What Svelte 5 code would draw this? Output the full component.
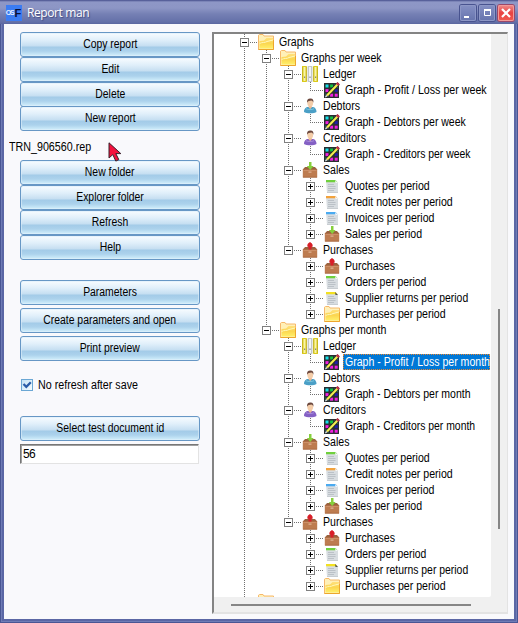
<script>
  const graphs = (suffix, selected = false) => [
    { label: 'Ledger', icon: 'ledger', kids: [{ label: 'Graph - Profit / Loss per ' + suffix, icon: 'graph', selected, scale: selected ? 0.88 : 0.889 }] },
    { label: 'Debtors', icon: 'debtor', kids: [{ label: 'Graph - Debtors per ' + suffix, icon: 'graph', scale: 0.875 }] },
    { label: 'Creditors', icon: 'creditor', kids: [{ label: 'Graph - Creditors per ' + suffix, icon: 'graph', scale: 0.867 }] },
    { label: 'Sales', icon: 'sales', kids: [
      { label: 'Quotes per period', icon: 'docgreen', closed: true },
      { label: 'Credit notes per period', icon: 'docorange', closed: true },
      { label: 'Invoices per period', icon: 'docblue', closed: true },
      { label: 'Sales per period', icon: 'sales', closed: true }
    ] },
    { label: 'Purchases', icon: 'purchases', kids: [
      { label: 'Purchases', icon: 'purchases', closed: true },
      { label: 'Orders per period', icon: 'docgreen', closed: true, scale: 0.865 },
      { label: 'Supplier returns per period', icon: 'docyellow', closed: true, scale: 0.867 },
      { label: 'Purchases per period', icon: 'folder', closed: true }
    ] }
  ];
  const tree = [
    { label: 'Graphs', icon: 'folder', kids: [
      { label: 'Graphs per week', icon: 'folder', kids: graphs('week') },
      { label: 'Graphs per month', icon: 'folder', kids: graphs('month', true) }
    ] },
    { label: '', icon: 'folder', closed: true, more: true }
  ];
  function flatten(nodes, depth = 0, lines = []) {
    return nodes.flatMap((n, i) => {
      const more = n.more || i < nodes.length - 1;
      return [{ ...n, depth, lines, more }, ...(n.kids ? flatten(n.kids, depth + 1, [...lines, more]) : [])];
    });
  }
  const rows = flatten(tree);
  const docColors = { docgreen: '#6fd03c', docorange: '#f2a23c', docblue: '#4aaaf0', docyellow: '#f2e020' };
  const dots = ['#14e0e8', '#10c040', '#14e0e8', '#f020e0', '#10c040', '#2020a8', '#14e0e8', '#f020e0', '#f020e0'];
  let checked = $state(true);
  let docId = $state('56');
</script>

{#snippet button(label)}
  <button><span class="t">{label}</span></button>
{/snippet}

{#snippet glyph(name)}
  <svg class="icon" width="16" height="16" viewBox="0 0 16 16">
    {#if name === 'folder'}
      <path d="M.5 15.5V1.2L1.5.5H5l1 1.5h9.5v13.5z" fill="#fff0b8" stroke="#f6b86a" />
      <path d="M1.5 14.5V7l4.5-.5L8.5 4H15v10.5z" fill="url(#folderFill)" />
      <path d="M1.5 9.5C4 8 7 9 9 7.5L15 6" stroke="#fff8bd" fill="none" />
      <path d="M.5 15.5h15V6" stroke="#eda72c" fill="none" />
    {:else if name === 'ledger'}
      <path d="M0 0h5v16H0zM11 0h5v16h-5z" fill="#dccb1c" />
      <path d="M5.5 0h5v16h-5z" fill="#c3c8cc" />
      <path d="M1.5 1h2v14h-2zM12.5 1h2v14h-2z" fill="#f8f3a8" />
      <path d="M7 1h2v14H7z" fill="#f2f4f6" />
      <path d="M5.2 0v16M10.8 0v16" stroke="#fff" stroke-width=".6" />
      <path d="M.3 1v14M4.6 1v14M11.4 1v14M15.7 1v14" stroke="#b0a11c" stroke-width=".6" />
      <path d="M2 10.5h1.2V12H2zM7.4 10.5h1.2V12H7.4zM13 10.5h1.2V12H13z" fill="#888" />
    {:else if name === 'graph'}
      <path d="M0 1h15v15H0z" fill="#2a2e31" />
      {#each dots as color, i}
        <rect x={1.5 + (i % 3) * 4.6} y={2.5 + Math.floor(i / 3) * 4.6} width="3" height="3" fill={color} />
      {/each}
      <path d="M2 14.5 14.5 1.5" stroke="#222" stroke-width="3.4" />
      <path d="M3 13.5 13.5 2.5" stroke="#f3ee50" stroke-width="2.2" />
      <path d="m13 2.8 1.7-1.7" stroke="#c03048" stroke-width="3" />
      <path d="m1 15.5 1-2.7 1.6 1.5z" fill="#eee" />
    {:else if name === 'debtor' || name === 'creditor'}
      <path d="M2 14C2 10.5 4 9 6 9h4.5c2.5 0 4 2 4 5-2 1.8-10.5 1.8-12.5 0z" fill={name === 'debtor' ? '#4a9fc6' : '#8460c4'} />
      <path d="M4 10.7c2 1.2 6 1.2 8 0" stroke={name === 'debtor' ? '#79c3dc' : '#a78ad8'} fill="none" />
      <path d="M6.6 7h3.2v2.5L8.2 11 6.6 9.5z" fill="#edb993" />
      <ellipse cx="8.2" cy="5" rx="2.9" ry="3.6" fill="#f4cda9" />
      <path d="M5 4.7C4.6 1.8 6.3.3 8.5.5c2.6 0 3.3 2 2.8 4.2-.6-1.5-1-2-2-2.1-1.6.2-3.3.3-4.3 2.1z" fill="#6b473c" />
    {:else if name === 'sales' || name === 'purchases'}
      <path d="M1 7.5 3 5h10l2 2.5z" fill="#9a6340" />
      <path d="M.8 7h14.4v8.5H.8z" fill="#bd7c50" />
      <path d="M1 7.3h14M1 15.2h14" stroke="#a0623c" stroke-width=".7" />
      <path d="M1.5 8.5h13" stroke="#cd9068" />
      <path d="M6.5 9.5h3v1.3h-3z" fill="#dfb292" />
      {#if name === 'sales'}
        <path d="M7 0h2.5v4h2.2L8.2 8 4.8 4H7z" fill="#86cf3c" />
      {:else}
        <path d="M8 0C9.3.6 11 2.2 10.7 4.4L9.5 5V7.5h-3V5L5.3 4.4C5 2.2 6.7.6 8 0z" fill="#d81f28" />
      {/if}
    {:else}
      <path d="M2 2h9.5L14 4.5V15H3z" fill="#d8dde1" />
      <path d="M2 2h9.5l2 2.2H2z" fill={docColors[name]} />
      <path d="m11 2 3 3h-2.5z" fill={name === 'docyellow' ? '#555' : '#f4f6f8'} />
      <path d="M4 6.5h6M4 8.5h7.5M4 10.5h7.5M4 12.5h6" stroke="#bbc1c7" />
      <path d="M3 14.5h11" stroke="#c8cdd1" />
    {/if}
  </svg>
{/snippet}

<svg class="defs" width="0" height="0">
  <defs>
    <linearGradient id="folderFill" x2="0" y2="1">
      <stop stop-color="#ffe07c" /><stop offset=".5" stop-color="#fbd650" /><stop offset="1" stop-color="#fff06a" />
    </linearGradient>
  </defs>
</svg>

<div class="window">
  <header>
    <div class="logo"><i>OS</i><b>F</b></div>
    <h1>Report man</h1>
    <div class="controls">
      <span class="ctl"><svg width="16" height="16"><path d="M4 12h5" stroke="#fff" stroke-width="2" /></svg></span>
      <span class="ctl"><svg width="16" height="16"><path d="M5.5 5.5h6v5h-6z" fill="none" stroke="#fff" /><path d="M5 5h7" stroke="#fff" stroke-width="2" /></svg></span>
      <span class="ctl close"><svg width="16" height="16"><path d="m4 4 8 8m0-8-8 8" stroke="#fff" stroke-width="2.2" /></svg></span>
    </div>
  </header>
  <main>
    <section class="side">
      <div class="group tight">
        {@render button('Copy report')}
        {@render button('Edit')}
        {@render button('Delete')}
        {@render button('New report')}
      </div>
      <div class="file"><span class="t">TRN_906560.rep</span></div>
      <div class="group">
        {@render button('New folder')}
        {@render button('Explorer folder')}
        {@render button('Refresh')}
        {@render button('Help')}
      </div>
      <div class="group spaced">
        {@render button('Parameters')}
        {@render button('Create parameters and open')}
        {@render button('Print preview')}
      </div>
      <label>
        <input type="checkbox" bind:checked />
        <span class="check">
          {#if checked}<svg width="10" height="10"><path d="M1.5 4 4.3 6.8 8.8 2.3" fill="none" stroke="#2a5ca8" stroke-width="2.3" /></svg>{/if}
        </span>
        <span class="t">No refresh after save</span>
      </label>
      {@render button('Select test document id')}
      <input class="field" bind:value={docId} />
    </section>
    <section class="panel">
      <div class="view">
        <div class="tree">
          {#each rows as row}
            <div class="row">
              <svg width={24 + row.depth * 22} height="16" shape-rendering="crispEdges">
                <g stroke="#707070" stroke-dasharray="1 1">
                  {#each row.lines as on, i}
                    {#if on}<path d="M{10.5 + i * 22} 0v16" />{/if}
                  {/each}
                  <path d="M{10.5 + row.depth * 22} 0v{row.more ? 16 : 8}" />
                  <path d="M{10 + row.depth * 22} 8.5h13" />
                </g>
                {#if row.kids || row.closed}
                  <rect x={6.5 + row.depth * 22} y="4.5" width="8" height="8" fill="#fff" stroke="#808080" />
                  <path d="M{8 + row.depth * 22} 8.5h5" stroke="#000" />
                  {#if row.closed}<path d="M{10.5 + row.depth * 22} 6v5" stroke="#000" />{/if}
                {/if}
              </svg>
              {@render glyph(row.icon)}
              <span class="label" class:selected={row.selected}><span class="t" style:--scale={row.scale ?? 0.882}>{row.label}</span></span>
            </div>
          {/each}
        </div>
        <div class="vbar"><i></i></div>
      </div>
      <div class="hbar"><i></i></div>
    </section>
  </main>
  <svg class="cursor" width="15" height="21"><path d="M1 .8 1 16l3.8-3.4 3 6.5 3-1.5-3-6h5z" fill="#f3113d" stroke="#38202b" /></svg>
</div>

<style>
  :global(body) { margin: 0; overflow: hidden; }
  * { box-sizing: border-box; }
  .defs { position: absolute; }
  .window {
    position: relative; width: 518px; height: 623px; display: flex; flex-direction: column;
    padding: 0 4px 4px; font: 12px/16px "Liberation Sans", Arial, sans-serif; color: #000;
    background: #5b67a5; box-shadow: inset 0 0 0 1px #4a5694, inset 0 0 0 2px #6f7cb6;
  }
  header {
    height: 24px; flex: none; margin: 0 -4px; padding: 1px 4px 0 6px; display: flex; align-items: center;
    background: linear-gradient(#464f8c 0, #8e97c6 2px, #8d96c5 8px, #7580b4 14px, #6470a8 22px, #5a66a0);
  }
  .logo {
    width: 16px; height: 16px; flex: none; display: flex; align-items: center; justify-content: center;
    background: #3c7cf2; font: bold 7px/16px "Liberation Sans", sans-serif; letter-spacing: -1.2px;
  }
  .logo i { font-style: normal; color: #e4eeff; margin-left: -1px; }
  .logo b { font-size: 11px; color: #081038; margin-left: 1px; letter-spacing: 0; }
  h1 { margin: 0 0 0 5px; flex: 1; font: 12px/22px "Open Sans", sans-serif; color: #fff; text-shadow: 1px 1px 1px #424b80; letter-spacing: -.4px; }
  .controls { display: flex; gap: 3px; }
  .ctl { width: 16px; height: 16px; border-radius: 2px; background: linear-gradient(#8590c4, #6673ad); box-shadow: 0 0 0 1px #48538f, inset 0 0 0 1px #8c96c6; }
  .ctl svg { display: block; }
  .close { background: linear-gradient(#ef8e8e, #e84240 50%, #f25c50); box-shadow: 0 0 0 1px #9a4769, inset 0 0 0 1px #f19a98; }
  main { flex: 1; min-height: 0; display: flex; background: #f9f9fc; padding: 8px 6px 5px 16px; }
  .side { width: 180px; display: flex; flex-direction: column; }
  .t { display: inline-block; white-space: pre; transform: scaleX(var(--scale, .892)); transform-origin: left center; }
  .group { display: flex; flex-direction: column; }
  button {
    width: 180px; height: 25px; flex: none; padding: 0 0 1px; border: 1px solid #6797c5; border-radius: 3px;
    font: inherit; color: #000;
    background: linear-gradient(#f8fcff 0, #e0effa 7px, #c5def1 13px, #a3cbe8 14px, #acd2ec 18px, #d3f0fc 23px);
    box-shadow: inset 0 0 0 1px #ddeefa99;
  }
  button .t { --scale: .866; transform-origin: center; }
  .tight button:last-child { margin-top: -1px; }
  .file { margin: 8px 0 5px -11px; height: 16px; }
  .spaced { margin-top: 20px; gap: 3px; }
  label { display: flex; align-items: center; height: 16px; margin: 16px 0 23px 1px; }
  label input { position: absolute; opacity: 0; }
  .check { width: 12px; height: 12px; border: 1px solid #6ba7d4; background: linear-gradient(135deg, #c4e2f5, #f5fcff); display: flex; margin-right: 5px; }
  .check svg { flex: none; }
  .field { height: 20px; width: 179px; margin-top: 3px; padding: 0 2px; border: 1px solid; border-color: #777 #e3e3e3 #e3e3e3 #777; box-shadow: inset 1px 1px #a0a0a0; background: #fff; font: inherit; letter-spacing: -.7px; outline: 0; }
  .panel { margin-left: 12px; width: 296px; height: 582px; border: 2px solid; border-color: #848484 #e3e3e3 #e3e3e3 #848484; border-right-width: 1px; display: flex; flex-direction: column; background: #f0f0f0; }
  .view { height: 563px; display: flex; flex: none; }
  .tree { width: 277px; height: 563px; overflow: hidden; background: #fff; padding-left: 20px; border-bottom-right-radius: 2px; }
  .row { display: flex; height: 16px; }
  .row > :global(svg) { flex: none; display: block; }
  .label { height: 16px; margin-left: 3px; padding-left: 2px; line-height: 16px; }
  .selected { flex: none; width: 147px; background: #0078d7; color: #fff; outline: 1px dotted #e88530; outline-offset: -1px; }
  .vbar { width: 16px; padding: 275px 0 0 7px; }
  .vbar i { display: block; width: 2px; height: 220px; background: #868686; }
  .hbar { flex: 1; padding: 7px 0 0 17px; }
  .hbar i { display: block; width: 240px; height: 2px; background: #868686; }
  .cursor { position: absolute; left: 108px; top: 142px; }
</style>
